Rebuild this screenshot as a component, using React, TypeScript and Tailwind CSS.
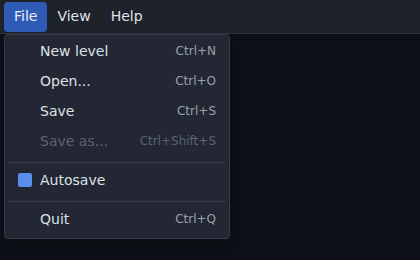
import React from "react";

type Item = {
  label?: string;
  shortcut?: string;
  disabled?: boolean;
  checked?: boolean;
  separator?: boolean;
};

const items: Item[] = [
  { label: "New level", shortcut: "Ctrl+N" },
  { label: "Open...", shortcut: "Ctrl+O" },
  { label: "Save", shortcut: "Ctrl+S" },
  { label: "Save as...", shortcut: "Ctrl+Shift+S", disabled: true },
  { separator: true },
  { label: "Autosave", checked: true },
  { separator: true },
  { label: "Quit", shortcut: "Ctrl+Q" },
];

const App = () => {
  return (
    <div
      className="relative w-[420px] h-[260px] bg-[#0d1117] overflow-hidden"
      style={{ fontFamily: '"DejaVu Sans", sans-serif' }}
    >
      {/* menu bar */}
      <div className="h-[34px] flex items-center pl-[4px] bg-[#1e222a] border-b border-[#2c313c] text-[14px] text-[#dfe2e7]">
        <div className="h-[30px] flex items-center px-[10px] rounded-[4px] bg-[#2f5bb7] text-[#e8edf7]">
          File
        </div>
        <div className="h-[30px] flex items-center px-[10px]">View</div>
        <div className="h-[30px] flex items-center px-[10px]">Help</div>
      </div>

      {/* file menu */}
      <div className="absolute top-[34px] left-[4px] w-[226px] pt-[1px] pb-[4px] rounded-[4px] bg-[#222733] border border-[#353b49] shadow-lg">
        {items.map((item, i) =>
          item.separator ? (
            <div key={i} className="mx-[3px] mt-[6px] mb-[2px] h-px bg-[#363c4a]" />
          ) : (
            <div
              key={i}
              className="h-[30px] flex items-center pl-[13px] pr-[13px] text-[14px]"
            >
              <div className="w-[22px] flex items-center">
                {item.checked && (
                  <div className="w-[14px] h-[14px] rounded-[2px] bg-[#5b8def]" />
                )}
              </div>
              <span
                className={
                  item.disabled ? "text-[#5c6370]" : "text-[#dde0e6]"
                }
              >
                {item.label}
              </span>
              {item.shortcut && (
                <span
                  className={
                    "ml-auto text-[12px] " +
                    (item.disabled ? "text-[#5c6370]" : "text-[#9aa0ab]")
                  }
                >
                  {item.shortcut}
                </span>
              )}
            </div>
          )
        )}
      </div>
    </div>
  );
};

export default App;
